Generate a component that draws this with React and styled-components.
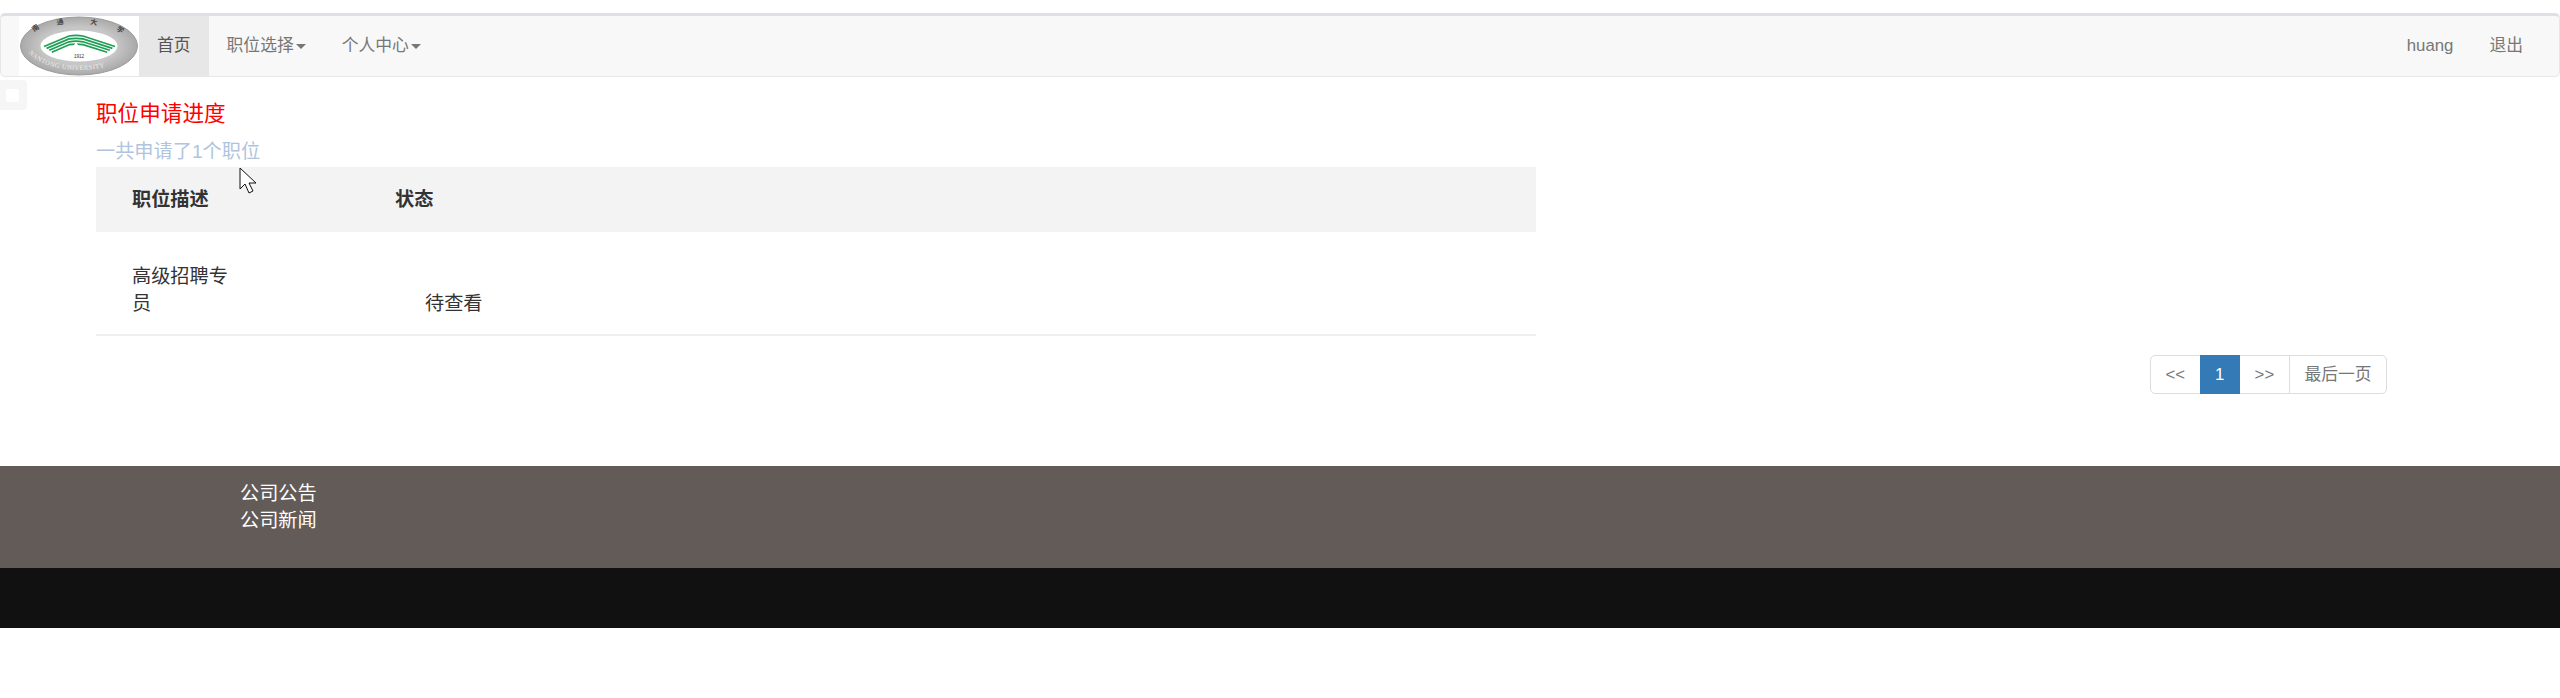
import React from "react";
import styled, { createGlobalStyle } from "styled-components";

const FONT = `"Liberation Sans", "Noto Sans CJK SC", sans-serif`;

const Global = createGlobalStyle`
  html, body { margin: 0; padding: 0; background: #fff; }
  body { font-family: ${FONT}; font-size: 19.2px; line-height: 27.4px; color: #333; }
  * { box-sizing: border-box; }
  a { text-decoration: none; color: inherit; }
`;

const Page = styled.div`
  position: relative;
  padding-top: 13px;
`;

const Navbar = styled.nav`
  display: flex;
  justify-content: space-between;
  height: 64px;
  border: 1px solid #e7e7e7;
  border-top: 3px solid #dfdfe6;
  border-radius: 5px;
  background: #f8f8f8;
  padding: 0 18px;
`;

const NavGroup = styled.div`
  display: flex;
  align-items: stretch;
`;

const LogoBox = styled.div`
  width: 120px;
  background: #fff;
`;

const NavItem = styled.a`
  display: flex;
  align-items: center;
  padding: 0 18px;
  font-size: 16.8px;
  color: ${(p) => (p.$active ? "#555" : "#777")};
  background: ${(p) => (p.$active ? "#e7e7e7" : "transparent")};
`;

const Caret = styled.span`
  display: inline-block;
  margin-left: 2px;
  border-top: 5px solid #777;
  border-left: 5px solid transparent;
  border-right: 5px solid transparent;
`;

const Content = styled.main`
  padding: 22px 0 0 96px;
`;

const Title = styled.div`
  font-size: 21.6px;
  line-height: 30px;
  color: #f00;
`;

const Count = styled.div`
  margin: 9px 0 2px;
  font-size: 19.2px;
  line-height: 27px;
  color: #b0c4de;
`;

const Table = styled.table`
  width: 1440px;
  table-layout: fixed;
  border-collapse: collapse;
`;

const HeadRow = styled.tr`
  height: 65px;
  background: #f3f3f3;
`;

const Th = styled.th`
  width: ${(p) => p.$width || "auto"};
  padding: 0 36px;
  text-align: left;
  font-size: 19.2px;
  font-weight: 700;
  color: #333;
`;

const BodyRow = styled.tr`
  border-bottom: 2px solid #f0f0f0;
`;

const TitleCell = styled.td`
  padding: 31px 130px 16px 36px;
  font-size: 19.2px;
  line-height: 27.4px;
`;

const StatusCell = styled.td`
  padding: 31px 0 16px 66px;
  vertical-align: bottom;
  font-size: 19.2px;
  line-height: 27.4px;
`;

const PagerRow = styled.div`
  display: flex;
  justify-content: flex-end;
  margin: 19px 173px 0 0;
`;

const Pager = styled.div`
  display: flex;
  height: 39px;
`;

const PageLink = styled.a`
  display: flex;
  align-items: center;
  padding: 0 14.4px;
  margin-left: -1px;
  font-size: 16.8px;
  color: ${(p) => (p.$active ? "#fff" : "#777")};
  background: ${(p) => (p.$active ? "#337ab7" : "#fff")};
  border: 1px solid ${(p) => (p.$active ? "#337ab7" : "#ddd")};
  z-index: ${(p) => (p.$active ? 1 : 0)};
  &:first-child { margin-left: 0; border-radius: 5px 0 0 5px; }
  &:nth-child(3) { padding: 0 14.9px; }
  &:last-child { border-radius: 0 5px 5px 0; }
`;

const Footer = styled.footer`
  margin-top: 72px;
`;

const Notices = styled.div`
  height: 102px;
  padding: 14px 0 0 240px;
  background: #635b58;
  color: #fff;
  font-size: 19.2px;
  line-height: 27px;
`;

const Legal = styled.div`
  height: 60px;
  background: #111;
`;

const SideTab = styled.div`
  position: absolute;
  left: 0;
  top: 80px;
  width: 27px;
  height: 30px;
  display: flex;
  align-items: center;
  justify-content: center;
  background: #f6f6f6;
  border-radius: 0 4px 4px 0;
`;

const SideDot = styled.div`
  width: 13px;
  height: 13px;
  margin-right: 3px;
  background: #fff;
  border-radius: 2px;
`;

const Cursor = styled.svg`
  position: absolute;
  left: 239px;
  top: 167px;
`;

function Logo() {
  const band = (i) => {
    const ay = 20 + i * 2.9;
    return `M${25 + i * 2.6} ${30.5 + i * 1.9} L50 ${ay} Q57 ${ay - 1.2} 64 ${ay} L${96 - i * 2.6} ${30.5 + i * 1.9}`;
  };
  return (
    <svg width="120" height="60" viewBox="0 0 120 60">
      <defs>
        <path id="rimBottom" d="M6 27 A54 27 0 0 0 114 27" />
        <radialGradient id="ringFill" cx="50%" cy="50%" r="50%">
          <stop offset="65%" stopColor="#c6c6c6" />
          <stop offset="100%" stopColor="#a9a9a9" />
        </radialGradient>
      </defs>
      <ellipse cx="60" cy="30" rx="58.5" ry="29" fill="url(#ringFill)" stroke="#9c9c9c" strokeWidth="1" />
      <ellipse cx="60" cy="30" rx="38.5" ry="15.5" fill="#fff" />
      <g fill="none" stroke="#1f9e55" strokeWidth="1.7">
        {[0, 1, 2, 3].map((i) => (
          <path key={i} d={band(i)} />
        ))}
      </g>
      <path d="M57 26 L49 38 L65 38 Z" fill="#fff" />
      <text x="60" y="42" textAnchor="middle" fontSize="4.6" fontFamily="Liberation Sans" fill="#333">1912</text>
      <g fontFamily="Noto Sans CJK SC" fontSize="7" fontWeight="700" fill="#444">
        <text x="15" y="16" transform="rotate(-35 15 16)">南</text>
        <text x="38" y="9" transform="rotate(-10 38 9)">通</text>
        <text x="71" y="8" transform="rotate(10 71 8)">大</text>
        <text x="97" y="14" transform="rotate(32 97 14)">学</text>
      </g>
      <text fontSize="6.6" fill="#ececec" fontFamily="Liberation Serif" letterSpacing="0.4">
        <textPath href="#rimBottom" startOffset="8%">NANTONG UNIVERSITY</textPath>
      </text>
    </svg>
  );
}

export default function App() {
  return (
    <Page>
      <Global />
      <Navbar>
        <NavGroup>
          <LogoBox>
            <Logo />
          </LogoBox>
          <NavItem $active href="#">首页</NavItem>
          <NavItem href="#">职位选择<Caret /></NavItem>
          <NavItem href="#">个人中心<Caret /></NavItem>
        </NavGroup>
        <NavGroup>
          <NavItem href="#">huang</NavItem>
          <NavItem href="#">退出</NavItem>
        </NavGroup>
      </Navbar>
      <SideTab><SideDot /></SideTab>
      <Content>
        <Title>职位申请进度</Title>
        <Count>一共申请了1个职位</Count>
        <Table>
          <thead>
            <HeadRow>
              <Th $width="263px">职位描述</Th>
              <Th>状态</Th>
            </HeadRow>
          </thead>
          <tbody>
            <BodyRow>
              <TitleCell>高级招聘专员</TitleCell>
              <StatusCell>待查看</StatusCell>
            </BodyRow>
          </tbody>
        </Table>
        <PagerRow>
          <Pager>
            <PageLink href="#">&lt;&lt;</PageLink>
            <PageLink $active href="#">1</PageLink>
            <PageLink href="#">&gt;&gt;</PageLink>
            <PageLink href="#">最后一页</PageLink>
          </Pager>
        </PagerRow>
      </Content>
      <Footer>
        <Notices>
          <div>公司公告</div>
          <div>公司新闻</div>
        </Notices>
        <Legal />
      </Footer>
      <Cursor width="20" height="28" viewBox="0 0 20 28">
        <path d="M1 1 L1 22 L6 17 L10 26 L14 24 L10 16 L17 16 Z" fill="#fff" stroke="#111" strokeWidth="1" />
      </Cursor>
    </Page>
  );
}
